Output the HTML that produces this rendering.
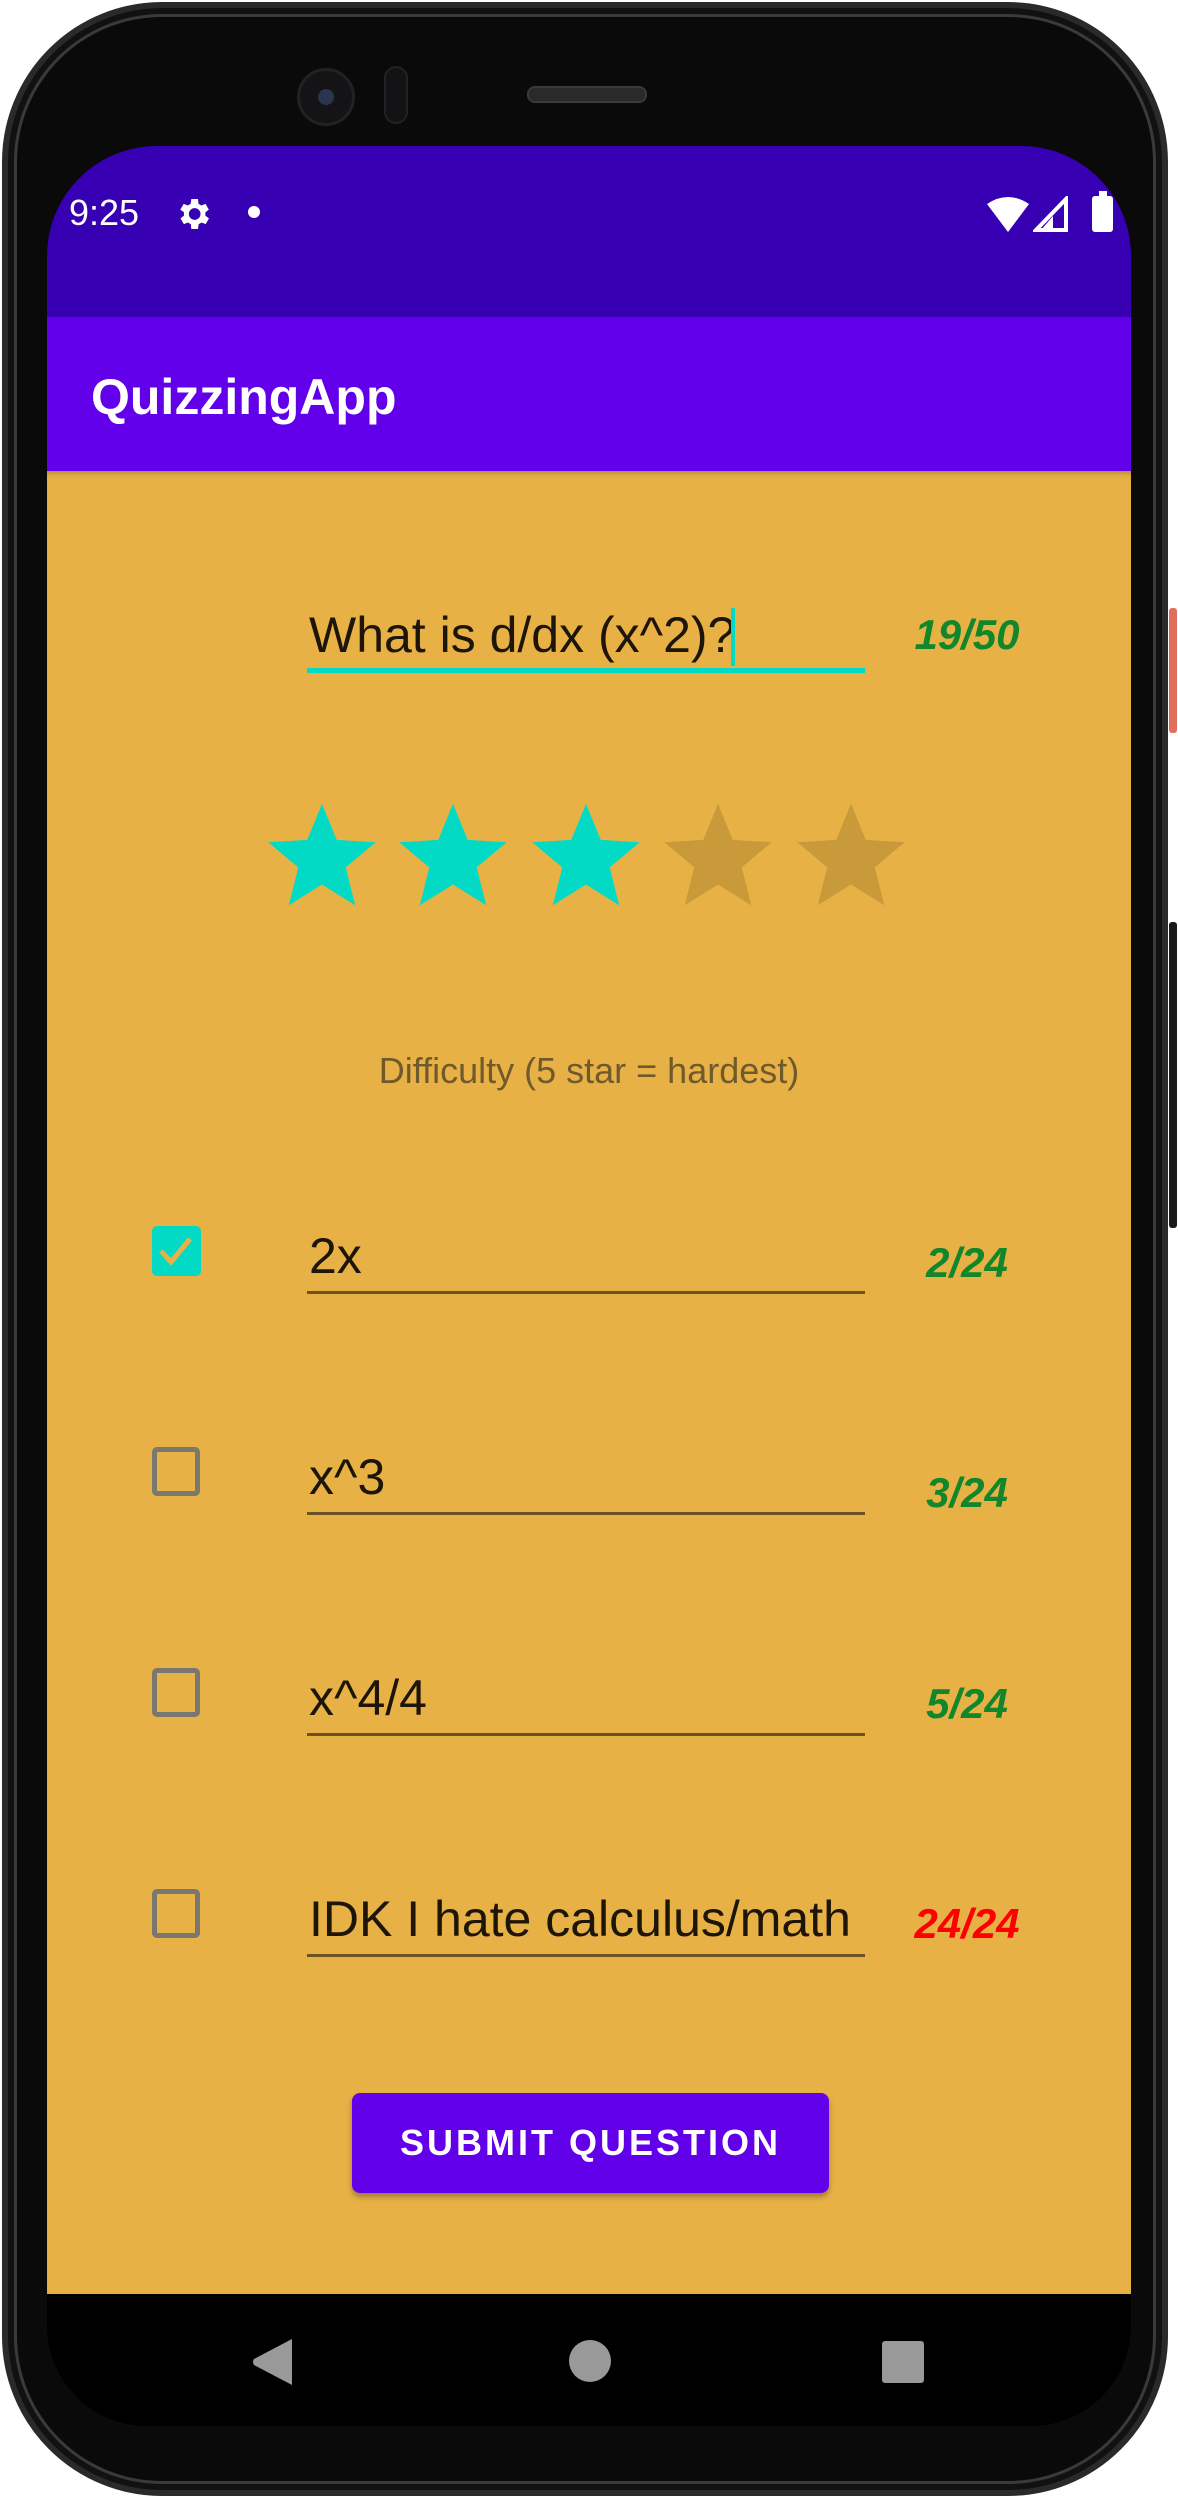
<!DOCTYPE html>
<html><head><meta charset="utf-8"><style>
*{margin:0;padding:0;box-sizing:border-box}
body{width:1178px;height:2498px;background:#fff;position:relative;overflow:hidden;font-family:"Liberation Sans",sans-serif}
.abs{position:absolute}
.body{left:2px;top:2px;width:1166px;height:2494px;border-radius:160px;background:#0a0a0b;border:6px solid #2a2a2c;box-shadow:inset 0 0 0 6px #111, inset 0 0 0 9px #3a3a3c}
.screen{left:47px;top:146px;width:1084px;height:2280px;border-radius:110px 110px 100px 100px;overflow:hidden;background:#000}
.u{position:absolute;left:260px;width:558px;height:3px;background:#6b5323}
.t{position:absolute;left:262px;font-size:50px;color:#1c1508}
.c{position:absolute;font-size:42px;font-weight:bold;font-style:italic;color:#11862a;width:140px;text-align:center;left:850px}
.cb{position:absolute;left:105px;width:48px;height:49px;border:5px solid #7a7770;border-radius:5px}
.star{position:absolute;top:328px;width:114px;height:114px}
</style></head><body>
<div class="abs body"></div>
<div class="abs" style="left:1169px;top:608px;width:8px;height:125px;background:#e0705a;border-radius:3px"></div>
<div class="abs" style="left:1169px;top:922px;width:8px;height:306px;background:#1a1a1a;border-radius:3px"></div>
<div class="abs" style="left:297px;top:68px;width:58px;height:58px;border-radius:50%;background:#141416;border:3px solid #222"></div>
<div class="abs" style="left:318px;top:89px;width:16px;height:16px;border-radius:50%;background:#2a3550"></div>
<div class="abs" style="left:384px;top:66px;width:24px;height:58px;border-radius:12px;background:#131315;border:2px solid #222"></div>
<div class="abs" style="left:527px;top:86px;width:120px;height:17px;border-radius:8px;background:#2a2a2a;border:2px solid #3a3a3a"></div>

<div class="abs screen">
  <div class="abs" style="left:0;top:0;width:1084px;height:171px;background:#3700b3"></div>
  <div class="abs" style="left:22px;top:46px;color:#fff;font-size:36px">9:25</div>
  <svg class="abs" style="left:126px;top:48px" width="40" height="40" viewBox="0 0 24 24"><path fill="#fff" d="M19.4 13a7.5 7.5 0 0 0 0-2l2.1-1.6-2-3.5-2.5 1a7 7 0 0 0-1.700-1L15 3h-4l-.4 2.9a7 7 0 0 0-1.7 1l-2.5-1-2 3.5L6.6 11a7.5 7.5 0 0 0 0 2l-2.1 1.6 2 3.5 2.5-1a7 7 0 0 0 1.7 1L11 21h4l.4-2.9a7 7 0 0 0 1.7-1l2.5 1 2-3.5zM13 15.5a3.5 3.5 0 1 1 0-7 3.5 3.5 0 0 1 0 7z"/></svg>
  <div class="abs" style="left:201px;top:60px;width:12px;height:12px;border-radius:50%;background:#fff"></div>
  <svg class="abs" style="left:940px;top:50px" width="42" height="36" viewBox="0 0 42 36"><path fill="#fff" d="M0 8Q21-6 42 8L21 36z"/></svg>
  <svg class="abs" style="left:986px;top:50px" width="36" height="36" viewBox="0 0 36 36"><path fill="none" stroke="#fff" stroke-width="4" d="M33 3V34H3z"/><path fill="#fff" d="M20 20V34H8z"/></svg>
  <div class="abs" style="left:1045px;top:50px;width:21px;height:36px;background:#fff;border-radius:3px"></div>
  <div class="abs" style="left:1052px;top:45px;width:8px;height:6px;background:#fff"></div>

  <div class="abs" style="left:0;top:171px;width:1084px;height:154px;background:#6200ea"></div>
  <div class="abs" style="left:44px;top:222px;color:#fff;font-size:50px;font-weight:bold">QuizzingApp</div>

  <div class="abs" style="left:0;top:325px;width:1084px;height:1823px;background:#e8b146;box-shadow:inset 0 6px 6px -4px rgba(0,0,0,.25)">
    <div class="t" style="top:135px">What is d/dx (x^2)?</div>
    <div class="abs" style="left:684px;top:137px;width:4px;height:58px;background:#03dac5"></div>
    <div class="u" style="top:197px;height:5px;background:#03dac5"></div>
    <div class="c" style="top:140px">19/50</div>

    <svg class="star" style="left:218px" viewBox="0 0 24 24"><path fill="#03dac5" d="M12 1l3.1 7.6 8.2.5-6.3 5.3 2 8L12 18l-7 4.4 2-8L.7 9.1l8.2-.5z"/></svg>
    <svg class="star" style="left:349px" viewBox="0 0 24 24"><path fill="#03dac5" d="M12 1l3.1 7.6 8.2.5-6.3 5.3 2 8L12 18l-7 4.4 2-8L.7 9.1l8.2-.5z"/></svg>
    <svg class="star" style="left:482px" viewBox="0 0 24 24"><path fill="#03dac5" d="M12 1l3.1 7.6 8.2.5-6.3 5.3 2 8L12 18l-7 4.4 2-8L.7 9.1l8.2-.5z"/></svg>
    <svg class="star" style="left:614px" viewBox="0 0 24 24"><path fill="#c89a3a" d="M12 1l3.1 7.6 8.2.5-6.3 5.3 2 8L12 18l-7 4.4 2-8L.7 9.1l8.2-.5z"/></svg>
    <svg class="star" style="left:747px" viewBox="0 0 24 24"><path fill="#c89a3a" d="M12 1l3.1 7.6 8.2.5-6.3 5.3 2 8L12 18l-7 4.4 2-8L.7 9.1l8.2-.5z"/></svg>

    <div class="abs" style="left:0;width:1084px;top:579px;text-align:center;font-size:36px;color:#6f5a2c">Difficulty (5 star = hardest)</div>

    <div class="abs" style="left:105px;top:755px;width:49px;height:50px;background:#03dac5;border-radius:5px"></div>
    <svg class="abs" style="left:110px;top:764px" width="38" height="32" viewBox="0 0 38 32"><path fill="none" stroke="#e8b146" stroke-width="5" d="M4 16l10 11L33 4"/></svg>
    <div class="t" style="top:756px">2x</div>
    <div class="u" style="top:820px"></div>
    <div class="c" style="top:768px">2/24</div>

    <div class="cb" style="top:976px"></div>
    <div class="t" style="top:977px">x^3</div>
    <div class="u" style="top:1041px"></div>
    <div class="c" style="top:998px">3/24</div>

    <div class="cb" style="top:1197px"></div>
    <div class="t" style="top:1198px">x^4/4</div>
    <div class="u" style="top:1262px"></div>
    <div class="c" style="top:1209px">5/24</div>

    <div class="cb" style="top:1418px"></div>
    <div class="t" style="top:1419px">IDK I hate calculus/math</div>
    <div class="u" style="top:1483px"></div>
    <div class="c" style="top:1429px;color:#ff0000">24/24</div>

    <div class="abs" style="left:305px;top:1622px;width:477px;height:100px;background:#6200ea;border-radius:8px;box-shadow:0 4px 6px rgba(0,0,0,.3);color:#fff;font-size:36px;font-weight:bold;letter-spacing:3px;text-align:center;line-height:100px">SUBMIT QUESTION</div>
  </div>

  <svg class="abs" style="left:205px;top:2193px" width="44" height="46" viewBox="0 0 44 46"><path fill="#999" d="M40 0V46L2 26Q0 23 2 20z"/></svg>
  <div class="abs" style="left:522px;top:2194px;width:42px;height:42px;border-radius:50%;background:#999"></div>
  <div class="abs" style="left:835px;top:2195px;width:42px;height:42px;border-radius:3px;background:#999"></div>
</div>
</body></html>
